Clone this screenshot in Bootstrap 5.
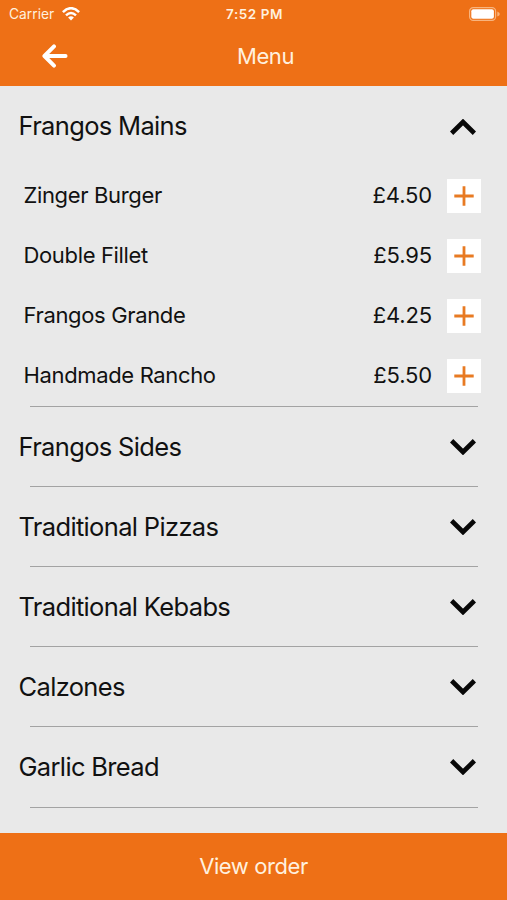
<!DOCTYPE html>
<html lang="en">
<head>
<meta charset="utf-8">
<meta name="viewport" content="width=device-width, initial-scale=1">
<title>Menu</title>
<link href="https://cdn.jsdelivr.net/npm/bootstrap@5.3.0/dist/css/bootstrap.min.css" rel="stylesheet">
<style>
  body { font-family: Inter, "Liberation Sans", sans-serif; background: #e9e9e9; color: #111; height: 900px; }
  .brand-bar { background: #ee7016; color: #fff0df; }
  .app-top { height: 86px; }
  .status-line { height: 28px; font-size: 13.8px; line-height: 28px; padding: 0 7px 0 9px; }
  .clock { font-weight: 600; font-size: 13.5px; letter-spacing: .55px; }
  .title-line { height: 56px; font-size: 22px; line-height: 56px; letter-spacing: -.45px; }
  .side { flex: 1 1 0; }
  .back { margin-left: 41px; }
  .section-head { height: 80px; padding: 1px 31px 0 18.5px; font-size: 25.5px; letter-spacing: -.66px; }
  .section-rule { height: 1px; margin: 0 29px 0 30px; background: #a3a3a3; }
  .section-gap { height: 79.2px; }
  .dish { height: 59.9px; padding: 0 26px 0 23.5px; font-size: 22px; letter-spacing: -.35px; }
  .price { letter-spacing: -.15px; }
  .add { width: 34px; height: 34px; background: #fff; margin-left: 15px; }
  .order-bar { height: 67px; font-size: 22px; letter-spacing: -.42px; }
</style>
</head>
<body class="d-flex flex-column overflow-hidden">
<svg class="d-none">
  <symbol id="chev" viewBox="0 0 26 16"><path d="M1.6 1.8 13 13 24.4 1.8" fill="none" stroke="#080808" stroke-width="4.7"/></symbol>
  <symbol id="plus" viewBox="0 0 20 20"><path d="M10 .3V19.7M.3 10H19.7" fill="none" stroke="#e87a22" stroke-width="2.8"/></symbol>
</svg>
<header class="brand-bar app-top flex-shrink-0">
  <div class="status-line d-flex align-items-center">
    <div class="side d-flex align-items-center"><span class="carrier">Carrier</span>
      <svg class="ms-2 wifi" width="18" height="14" viewBox="0 0 18 14" fill="none" stroke="#fff" stroke-width="2.5"><path d="M.9 5.1Q9-2.7 17.1 5.1M4 8.3Q9 3.7 14 8.3"/><path d="M6.1 10.4Q9 8.2 11.9 10.4L9 13.4Z" fill="#fff" stroke="none"/></svg>
    </div>
    <span class="clock">7:52 PM</span>
    <div class="side d-flex align-items-center justify-content-end">
      <svg width="31" height="14" viewBox="0 0 31 14"><rect x=".6" y=".6" width="26" height="12.8" rx="3.6" fill="none" stroke="#f8b47e" stroke-width="1.2"/><rect x="2.3" y="2.3" width="22.6" height="9.4" rx="2" fill="#fff"/><path d="M28.3 4.5Q30.8 5.5 30.8 7T28.3 9.5Z" fill="#f8b47e"/></svg>
    </div>
  </div>
  <div class="title-line d-flex align-items-center">
    <div class="side d-flex"><svg class="back" width="27" height="24" viewBox="0 0 27 24" fill="none" stroke="#fff" stroke-width="3.9" stroke-linecap="round" stroke-linejoin="round"><path d="M13 2.4 3.4 12 13 21.6M3.8 12H24.6"/></svg></div>
    <span class="page-title ps-4">Menu</span>
    <div class="side"></div>
  </div>
</header>
<main class="flex-grow-1 overflow-hidden">
  <section>
    <div class="section-head d-flex align-items-center justify-content-between"><span>Frangos Mains</span><svg width="26" height="16" style="transform:rotate(180deg)"><use href="#chev"/></svg></div>
    <div class="dish d-flex align-items-center"><span class="me-auto">Zinger Burger</span><span class="price">£4.50</span><span class="add d-flex align-items-center justify-content-center"><svg width="20" height="20"><use href="#plus"/></svg></span></div>
    <div class="dish d-flex align-items-center"><span class="me-auto">Double Fillet</span><span class="price">£5.95</span><span class="add d-flex align-items-center justify-content-center"><svg width="20" height="20"><use href="#plus"/></svg></span></div>
    <div class="dish d-flex align-items-center"><span class="me-auto">Frangos Grande</span><span class="price">£4.25</span><span class="add d-flex align-items-center justify-content-center"><svg width="20" height="20"><use href="#plus"/></svg></span></div>
    <div class="dish d-flex align-items-center"><span class="me-auto">Handmade Rancho</span><span class="price">£5.50</span><span class="add d-flex align-items-center justify-content-center"><svg width="20" height="20"><use href="#plus"/></svg></span></div>
  </section>
  <div class="section-rule"></div>
  <div class="section-head section-gap d-flex align-items-center justify-content-between"><span>Frangos Sides</span><svg width="26" height="16"><use href="#chev"/></svg></div>
  <div class="section-rule"></div>
  <div class="section-head section-gap d-flex align-items-center justify-content-between"><span>Traditional Pizzas</span><svg width="26" height="16"><use href="#chev"/></svg></div>
  <div class="section-rule"></div>
  <div class="section-head section-gap d-flex align-items-center justify-content-between"><span>Traditional Kebabs</span><svg width="26" height="16"><use href="#chev"/></svg></div>
  <div class="section-rule"></div>
  <div class="section-head section-gap d-flex align-items-center justify-content-between"><span>Calzones</span><svg width="26" height="16"><use href="#chev"/></svg></div>
  <div class="section-rule"></div>
  <div class="section-head section-gap d-flex align-items-center justify-content-between"><span>Garlic Bread</span><svg width="26" height="16"><use href="#chev"/></svg></div>
  <div class="section-rule"></div>
</main>
<footer class="brand-bar order-bar flex-shrink-0 d-flex align-items-center justify-content-center">View order</footer>
<script src="https://cdn.jsdelivr.net/npm/bootstrap@5.3.0/dist/js/bootstrap.bundle.min.js"></script>
</body>
</html>
